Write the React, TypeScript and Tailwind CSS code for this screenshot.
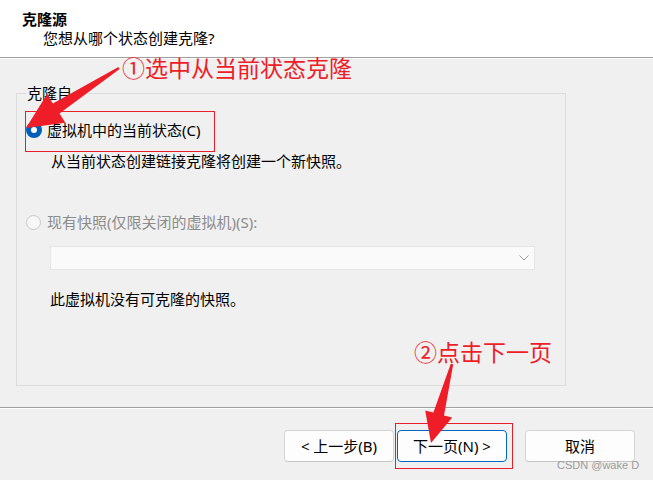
import React from 'react';

const uiFont = { fontFamily: '"Segoe UI", "Noto Sans", "Noto Sans CJK SC", sans-serif' };
const markFont = { fontFamily: '"Noto Sans CJK SC", sans-serif' };

const DialogButton: React.FC<{ label: string; primary?: boolean }> = ({ label, primary }) => (
  <div
    className={`w-[110px] h-[32px] flex items-center justify-center rounded-[4px] bg-[#fdfdfd] text-[15px] text-black ${
      primary ? 'border border-[#0067c0]' : 'border border-[#d5d5d5] border-b-[#c4c4c4]'
    }`}
  >
    {label}
  </div>
);

const Annotations: React.FC = () => (
  <>
    {/* red highlight boxes */}
    <div className="absolute left-[25px] top-[111px] w-[190px] h-[41px] border border-[#e8202a]" />
    <div className="absolute left-[395px] top-[423px] w-[118px] h-[46px] border border-[#e8202a]" />

    {/* callout texts */}
    <div className="absolute left-[122px] top-[56px] text-[23px] leading-[23px] text-[#ee1d27]" style={markFont}>
      ①选中从当前状态克隆
    </div>
    <div className="absolute left-[414px] top-[340px] text-[23px] leading-[23px] text-[#ee1d27]" style={markFont}>
      ②点击下一页
    </div>

    {/* arrows */}
    <svg className="absolute left-0 top-0 pointer-events-none" width="653" height="480" viewBox="0 0 653 480">
      <polygon
        fill="#ee1d27"
        points="119.6,69 59.5,113.5 65.4,122.8 26,128 47,94.2 52.9,103.5 118.4,67"
      />
      <polygon
        fill="#ee1d27"
        points="453.2,364.3 444,415.4 452.2,417.6 431,443 425.2,410.4 433.4,412.6 450.8,363.7"
      />
    </svg>
  </>
);

export default function App() {
  return (
    <div className="relative w-[653px] h-[480px] overflow-hidden bg-[#f0f0f0] text-black" style={uiFont}>
      {/* header */}
      <div className="h-[58px] bg-white pl-[22px] pt-[10px] border-b border-[#a0a0a0]">
        <div className="text-[15px] leading-[19px] font-bold">克隆源</div>
        <div className="pl-[21px] text-[15px] leading-[19px]">您想从哪个状态创建克隆?</div>
      </div>
      <div className="h-px bg-white" />

      {/* body */}
      <div className="h-[348px] pt-[34px] pl-[16px]">
        <div className="relative w-[550px] h-[293px] border border-[#dcdcdc] pl-[9px]">
          <div className="absolute left-[9px] -top-[10px] px-[1px] bg-[#f0f0f0] text-[15px] leading-[19px]">克隆自</div>

          <div className="mt-[28px] flex items-center h-[16px]">
            <div className="w-4 h-4 rounded-full bg-[#005fb8] flex items-center justify-center">
              <div className="w-[6px] h-[6px] rounded-full bg-white" />
            </div>
            <span className="ml-[5px] text-[15px] leading-[19px]">虚拟机中的当前状态(C)</span>
          </div>
          <div className="mt-[14px] pl-[25px] text-[15px] leading-[19px]">从当前状态创建链接克隆将创建一个新快照。</div>

          <div className="mt-[43px] flex items-center h-[16px]">
            <div className="w-[15px] h-[15px] rounded-full border border-[#c8c8c8] bg-[#f7f7f7]" />
            <span className="ml-[6px] text-[15px] leading-[19px] text-[#8c8c8c]">现有快照(仅限关闭的虚拟机)(S):</span>
          </div>

          <div className="mt-[16px] ml-[24px] w-[485px] h-[24px] bg-[#fafafa] border border-[#e6e6e6] flex items-center justify-end pr-[5px]">
            <svg width="10" height="6" viewBox="0 0 10 6">
              <path d="M0.5 0.5 L5 5 L9.5 0.5" fill="none" stroke="#9a9a9a" strokeWidth="1" />
            </svg>
          </div>

          <div className="mt-[20px] pl-[24px] text-[15px] leading-[19px]">此虚拟机没有可克隆的快照。</div>
        </div>
      </div>

      {/* footer */}
      <div className="border-t border-[#a0a0a0]">
        <div className="h-px bg-white" />
        <div className="flex pt-[21px] pl-[284px]">
          <DialogButton label="< 上一步(B)" />
          <div className="ml-[3px]">
            <DialogButton label="下一页(N) >" primary />
          </div>
          <div className="ml-[18px]">
            <DialogButton label="取消" />
          </div>
        </div>
      </div>

      <div
        className="absolute left-[557px] top-[459px] text-[11px] leading-[13px] text-[#9b9b9b]"
        style={{ fontFamily: '"Liberation Sans", Arial, sans-serif' }}
      >
        CSDN @wake D
      </div>

      <Annotations />
    </div>
  );
}
